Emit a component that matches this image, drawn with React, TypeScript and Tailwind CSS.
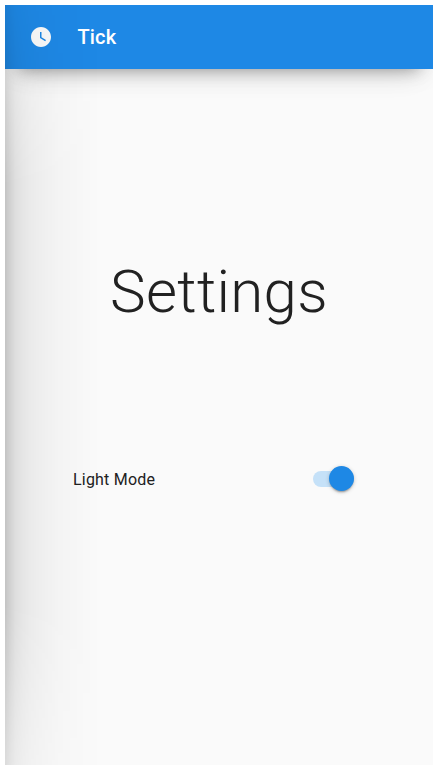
export default function App() {
  return (
    <div className="h-[774px] w-[442px] bg-white p-[5px] font-['Roboto',sans-serif]">
      <div className="relative flex h-[760px] w-[428px] flex-col overflow-hidden bg-[#fafafa] text-[#212121]">
        <header className="flex h-16 shrink-0 items-center bg-[#1e88e5] pl-6 text-white shadow-[0_14px_16px_-14px_rgba(0,0,0,0.34),0_20px_28px_-16px_rgba(0,0,0,0.12),0_6px_30px_-2px_rgba(0,0,0,0.05)]">
          <svg viewBox="0 0 24 24" className="size-6 fill-[#fafafa]">
            <path d="M12 2C6.500 2 2 6.500 2 12s4.500 10 10 10 10-4.500 10-10S17.500 2 12 2m4.200 14.200L11 13V7h1.500v5.200l4.500 2.700z" />
          </svg>
          <h1 className="ml-[24.500px] text-[20px] leading-8 font-medium tracking-[0.15px]">Tick</h1>
        </header>
        <main className="flex flex-col">
          <h2 className="mt-[193px] text-center text-[60px] leading-[60px] font-light tracking-[0.3px]">Settings</h2>
          <div className="mt-[137px] flex h-[38px] items-center justify-between pr-[79px] pl-[68px]">
            <span className="mt-[4px] text-[16px] leading-6 tracking-[0.2px]">Light Mode</span>
            <span className="mt-px flex h-4 w-[41px] items-center justify-end rounded-full bg-[#c5e1f8]">
              <span className="size-[25px] shrink-0 rounded-full bg-[#1e88e5] shadow-[0_2px_2px_-1px_rgba(0,0,0,0.3),0_1px_4px_rgba(0,0,0,0.2)]" />
            </span>
          </div>
        </main>
        <div className="pointer-events-none absolute top-0 left-0 h-full w-[95px] bg-[linear-gradient(to_right,rgba(0,0,0,0.22)_0px,rgba(0,0,0,0.16)_5px,rgba(0,0,0,0.115)_10px,rgba(0,0,0,0.085)_16px,rgba(0,0,0,0.063)_25px,rgba(0,0,0,0.048)_35px,rgba(0,0,0,0.024)_55px,rgba(0,0,0,0.01)_75px,transparent_95px)] [mask-image:linear-gradient(to_bottom,rgba(0,0,0,0.4)_0px,rgba(0,0,0,0.7)_80px,black_180px,black_600px,rgba(0,0,0,0.55)_760px)]" />
      </div>
    </div>
  );
}
